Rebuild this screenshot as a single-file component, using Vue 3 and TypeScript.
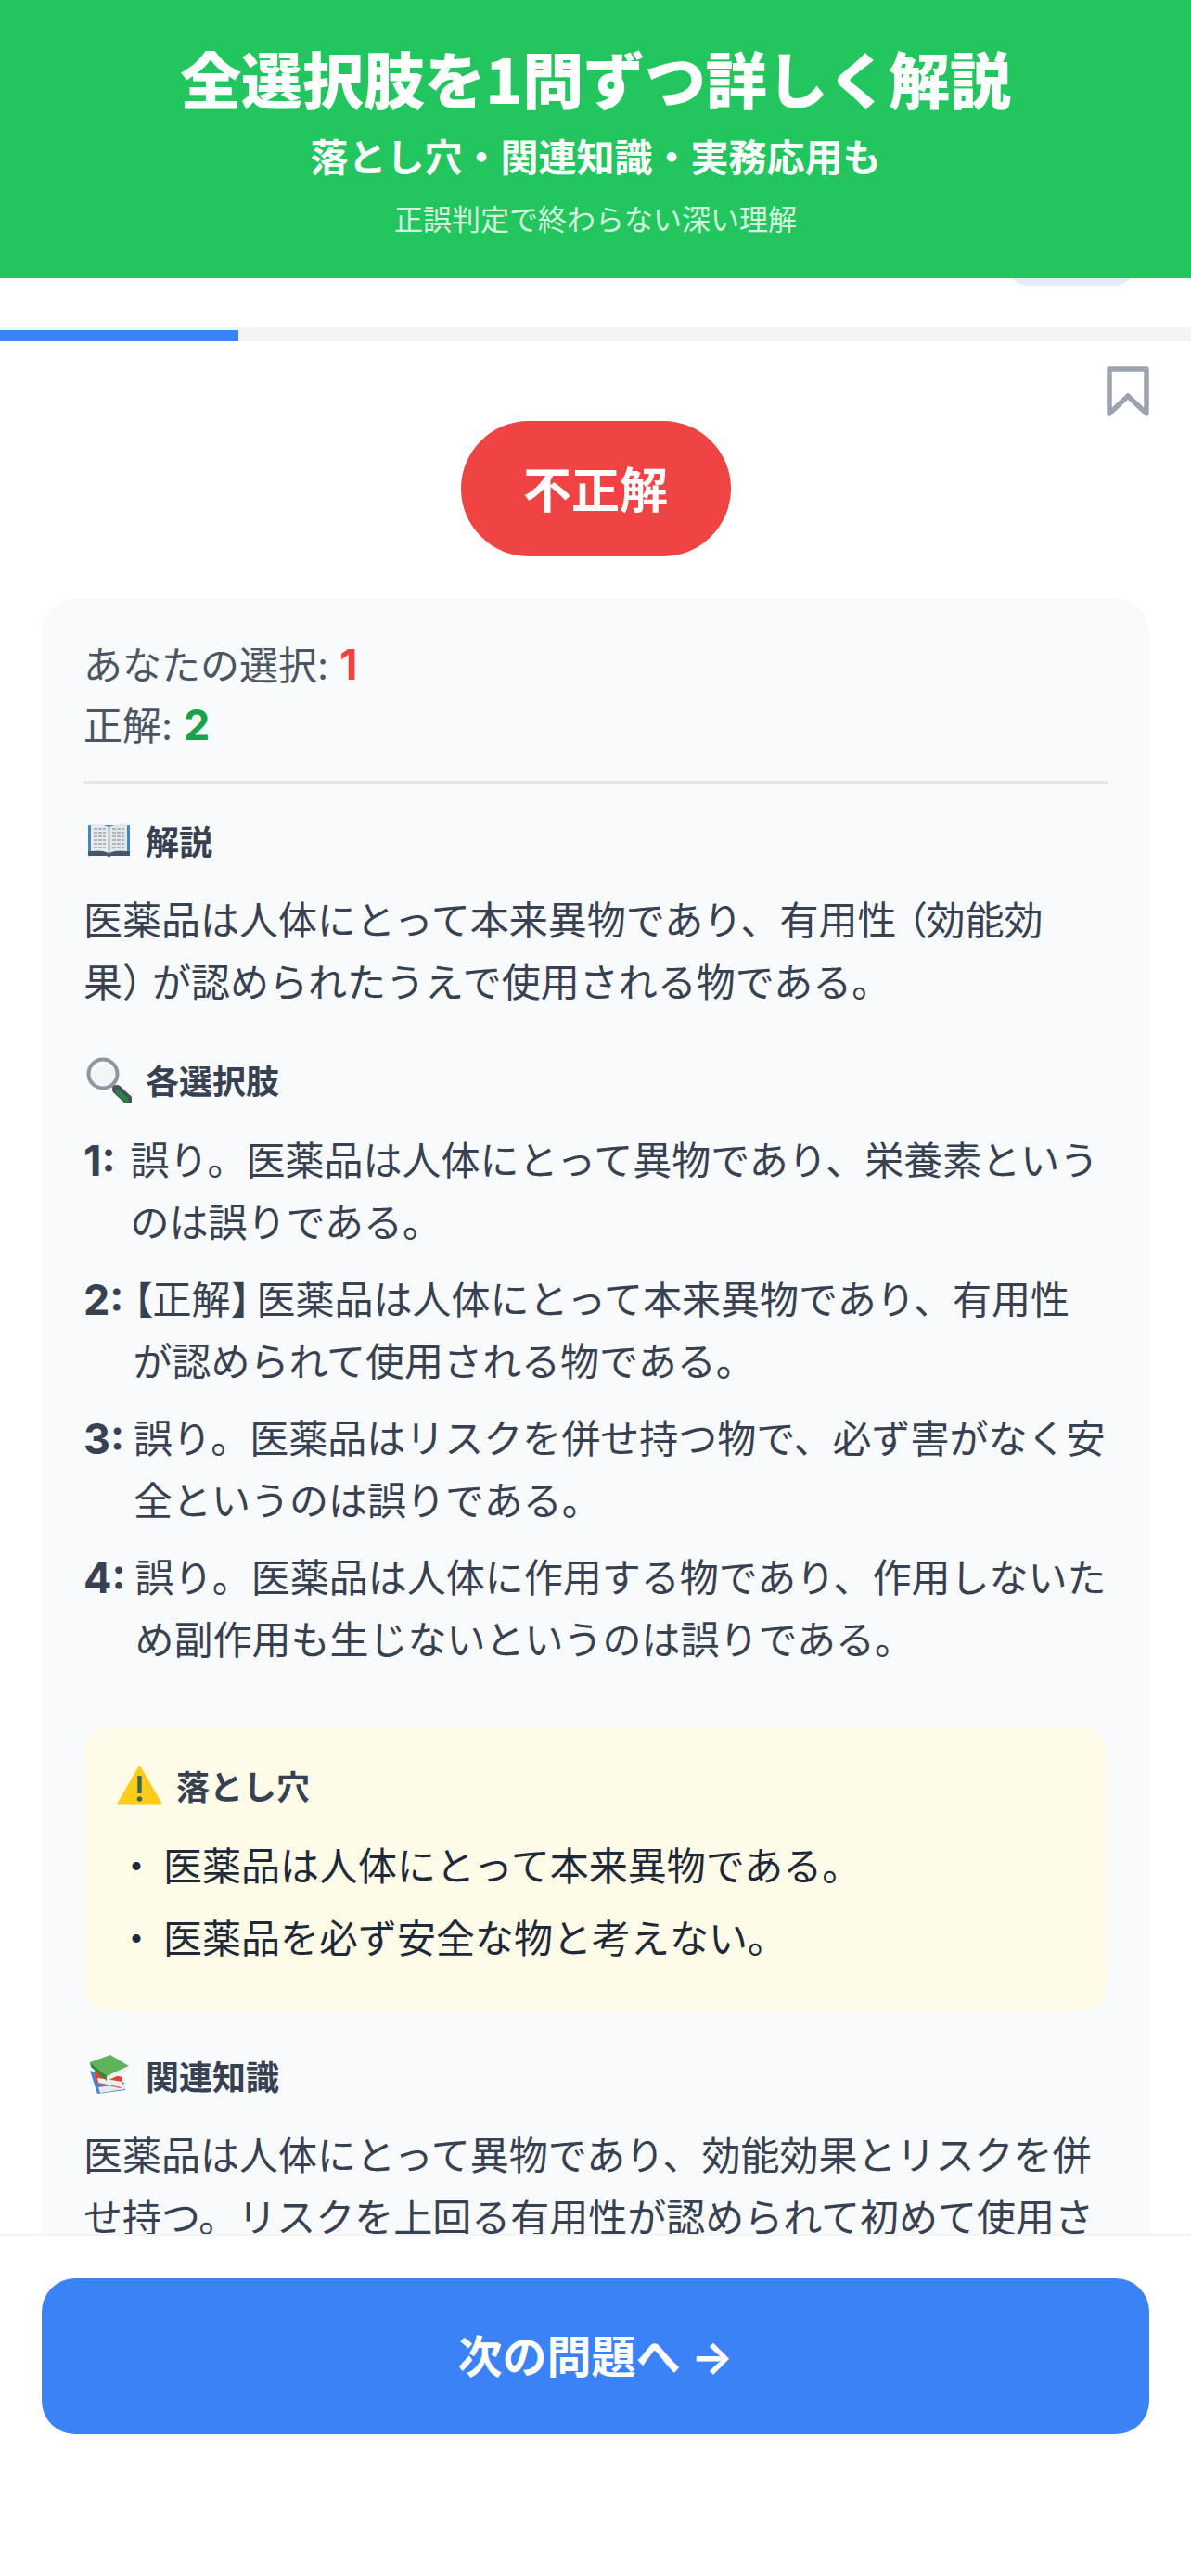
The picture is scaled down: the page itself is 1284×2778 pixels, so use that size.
<template>
  <div class="page">
    <header class="banner">
      <h1>全選択肢を1問ずつ詳しく解説</h1>
      <p class="banner-sub">落とし穴・関連知識・実務応用も</p>
      <p class="banner-note">正誤判定で終わらない深い理解</p>
    </header>

    <main class="scroll">
      <div class="topbar"><span class="pill"></span></div>
      <div class="progress"><div class="progress-fill" :style="{ width: progress + '%' }"></div></div>

      <div class="mark-row">
        <svg class="bookmark" width="46" height="54" viewBox="0 0 46 54" fill="none">
          <path d="M3 3h40v48L23 32 3 51z" stroke="#9ca3af" stroke-width="5.5" stroke-linejoin="round" stroke-linecap="round" />
        </svg>
      </div>
      <div class="result-row"><span class="result">不正解</span></div>

      <section class="card">
        <div class="answers">
          <p>あなたの選択: <b class="wrong">1</b></p>
          <p>正解: <b class="right">2</b></p>
        </div>

        <h2 class="heading">
          <svg class="emoji" viewBox="0 0 52 50">
            <rect x="5" y="9" width="45" height="33" rx="1" fill="#3f87c9" />
            <path d="M5 37h45v5H30l-2.500 1.500L25 42H5z" fill="#46566a" />
            <path d="M8 8c6-1 13 0 19.500 3v28c-6.500-3-13-3-19.500-2z" fill="#e9ecee" />
            <path d="M47 8c-6-1-13 0-19.500 3v28c6.500-3 13-3 19.500-2z" fill="#e4e7ea" />
            <path d="M11 13h13M11 17h13M11 21h13M11 25h13M11 29h13M11 33h13M31 13h13M31 17h13M31 21h13M31 25h13M31 29h13M31 33h13" stroke="#9aa3ac" stroke-width="1.300" stroke-dasharray="4 1" />
            <path d="M27.500 11v29" stroke="#6f7b88" stroke-width="1.500" />
          </svg>
          解説
        </h2>
        <p class="para">医薬品は人体にとって本来異物であり、有用性<span class="paren-open">（</span>効能効果<span class="paren-close">）</span>が認められたうえで使用される物である。</p>

        <h2 class="heading choices-heading">
          <svg class="emoji" viewBox="0 0 52 50">
            <path d="M31 31l5 5" stroke="#6d747b" stroke-width="4.500" />
            <path d="M36 36l12 11" stroke="#4b5158" stroke-width="10" stroke-linecap="round" />
            <path d="M37 39l9 8" stroke="#23893f" stroke-width="4.500" stroke-linecap="round" />
            <circle cx="21" cy="19" r="15.500" fill="#f3f5f6" stroke="#8f979e" stroke-width="4" />
            <path d="M11 16c1-5 5-8 11-8" stroke="#ffffff" stroke-width="2.500" fill="none" />
          </svg>
          各選択肢
        </h2>
        <ul class="choices">
          <li v-for="c in choices" :key="c.no">
            <b>{{ c.no }}:</b>
            <span class="choice-text" :class="{ 'is-correct': c.correct }"><template v-if="c.correct"><span class="bracket-open">【</span>正解<span class="bracket-close">】</span></template>{{ c.text }}</span>
          </li>
        </ul>

        <div class="pitfall">
          <h2 class="heading pitfall-heading">
            <svg class="emoji" viewBox="0 0 52 50">
              <path d="M24.500 6L47 45H2z" fill="#ffcc1a" stroke="#ffcc1a" stroke-width="3" stroke-linejoin="round" />
              <path d="M24.500 15v19" stroke="#3d6b45" stroke-width="4.500" />
              <circle cx="24.500" cy="40" r="2.800" fill="#3d6b45" />
            </svg>
            落とし穴
          </h2>
          <ul class="pitfall-list">
            <li v-for="p in pitfalls" :key="p"><span class="dot">・</span>{{ p }}</li>
          </ul>
        </div>

        <h2 class="heading related-heading">
          <svg class="emoji" viewBox="0 0 52 50">
            <g transform="translate(7 3)">
              <path d="M0 17l8 25 30-4-1-8z" fill="#4a86c5" />
              <path d="M9 35l29-4v6L11 41z" fill="#e6eaee" />
              <path d="M5 17l2 13 26 6 2-12z" fill="#e2452f" />
              <path d="M8 25l26 3v7L9 30z" fill="#eceff1" />
              <path d="M7 19l27 5v5L8 24z" fill="#e2452f" />
              <path d="M0 8L22 0l20 12-24 11z" fill="#5fb35a" />
              <path d="M0 8l18 15v5L1 13z" fill="#2f8a3c" />
              <path d="M18 23l24-11-2 6-22 10z" fill="#eef0f2" />
            </g>
          </svg>
          関連知識
        </h2>
        <p class="para">医薬品は人体にとって異物であり、効能効果とリスクを併せ持つ。リスクを上回る有用性が認められて初めて使用される。</p>
      </section>
    </main>

    <footer class="footer">
      <button class="next">次の問題へ →</button>
    </footer>
  </div>
</template>

<script setup lang="ts">
const progress: number = 20;

const choices: { no: number; text: string; correct?: boolean }[] = [
  { no: 1, text: '誤り。医薬品は人体にとって異物であり、栄養素というのは誤りである。' },
  { no: 2, text: '医薬品は人体にとって本来異物であり、有用性が認められて使用される物である。', correct: true },
  { no: 3, text: '誤り。医薬品はリスクを併せ持つ物で、必ず害がなく安全というのは誤りである。' },
  { no: 4, text: '誤り。医薬品は人体に作用する物であり、作用しないため副作用も生じないというのは誤りである。' },
];

const pitfalls: string[] = [
  '医薬品は人体にとって本来異物である。',
  '医薬品を必ず安全な物と考えない。',
];
</script>

<style>
html,
body {
  margin: 0;
  background: #ffffff;
}
</style>

<style scoped>
.page {
  width: 1284px;
  height: 2778px;
  display: flex;
  flex-direction: column;
  overflow: hidden;
  background: #ffffff;
  font-family: Inter, "Noto Sans CJK JP", sans-serif;
  color: #374151;
}

.banner {
  flex: none;
  height: 300px;
  box-sizing: border-box;
  padding-top: 43px;
  background: #22c55e;
  color: #ffffff;
  text-align: center;
}

.banner h1 {
  margin: 0;
  font-family: "Noto Sans CJK JP", sans-serif;
  font-size: 66px;
  line-height: 80px;
  font-weight: 900;
  letter-spacing: -0.2px;
}

.banner-sub {
  margin: 19px 0 0;
  font-size: 41px;
  line-height: 56px;
  font-weight: 700;
}

.banner-note {
  margin: 17px 0 0;
  font-size: 31px;
  line-height: 44px;
  opacity: 0.8;
}

.scroll {
  flex: 1;
  min-height: 0;
  overflow: hidden;
}

.topbar {
  height: 53px;
  display: flex;
  justify-content: flex-end;
  padding-right: 59px;
}

.pill {
  width: 140px;
  height: 60px;
  margin-top: -52px;
  border-radius: 24px;
  background: #e3edfd;
}

.progress {
  height: 15px;
  background: #f3f4f6;
  display: flex;
  align-items: flex-end;
}

.progress-fill {
  height: 12px;
  background: #3b82f6;
}

.mark-row {
  height: 86px;
  box-sizing: border-box;
  padding: 27px 45px 0 0;
  display: flex;
  justify-content: flex-end;
}

.result-row {
  display: flex;
  justify-content: center;
}

.result {
  width: 291px;
  height: 146px;
  box-sizing: border-box;
  padding-bottom: 4px;
  border-radius: 73px;
  background: #ef4444;
  color: #ffffff;
  font-size: 52px;
  font-weight: 700;
  display: flex;
  align-items: center;
  justify-content: center;
}

.card {
  margin: 45px 45px 0;
  padding: 40px 45px;
  border-radius: 36px;
  background: #f9fafb;
}

.answers {
  padding-bottom: 27px;
  border-bottom: 3px solid #e5e7eb;
  color: #4b5563;
  font-size: 42px;
  line-height: 64px;
}

.answers p {
  margin: 0;
}

.answers b {
  font-size: 45px;
}

.wrong {
  color: #ef4444;
}

.right {
  color: #16a34a;
}

.heading {
  margin: 34px 0 0;
  display: flex;
  align-items: center;
  gap: 15px;
  height: 54px;
  font-size: 36px;
  font-weight: 700;
  color: #374151;
}

.emoji {
  width: 52px;
  height: 50px;
  flex: none;
}

.para {
  margin: 26px 0 0;
  font-size: 42px;
  line-height: 67px;
}

.paren-open {
  font-feature-settings: "palt";
  margin-left: 11px;
}

.paren-close {
  letter-spacing: -10px;
}

.choices-heading {
  margin-top: 44px;
}

.choices {
  list-style: none;
  margin: 27px 0 0;
  padding: 0;
  font-size: 42px;
  line-height: 67px;
}

.choices li {
  display: flex;
  gap: 10px;
  margin-bottom: 16px;
}

.choices li:first-child {
  gap: 16px;
}

.choices li b {
  flex: none;
  font-size: 45px;
}

.choice-text {
  margin-right: -4px;
}

.choice-text.is-correct {
  margin-right: 8px;
}

.bracket-open {
  font-feature-settings: "palt";
}

.bracket-close {
  letter-spacing: -14px;
}

.pitfall {
  margin-top: 60px;
  padding: 36px 36px 34px;
  border-radius: 30px;
  background: #fefce8;
}

.pitfall-heading {
  margin: 0;
  gap: 12px;
}

.pitfall-list {
  list-style: none;
  margin: 27px 0 0;
  padding: 0;
  font-size: 42px;
  line-height: 67px;
  color: #1f2937;
}

.pitfall-list li {
  margin-bottom: 11px;
  display: flex;
}

.dot {
  width: 50px;
  flex: none;
}

.related-heading {
  margin-top: 42px;
}

.footer {
  flex: none;
  height: 369px;
  box-sizing: border-box;
  padding: 46px 45px 0;
  border-top: 2px solid #f3f4f6;
  background: #ffffff;
}

.next {
  width: 100%;
  height: 168px;
  box-sizing: border-box;
  padding: 0 0 6px;
  border: none;
  border-radius: 36px;
  background: #3b82f6;
  color: #ffffff;
  font-family: inherit;
  font-size: 48px;
  font-weight: 700;
}
</style>
